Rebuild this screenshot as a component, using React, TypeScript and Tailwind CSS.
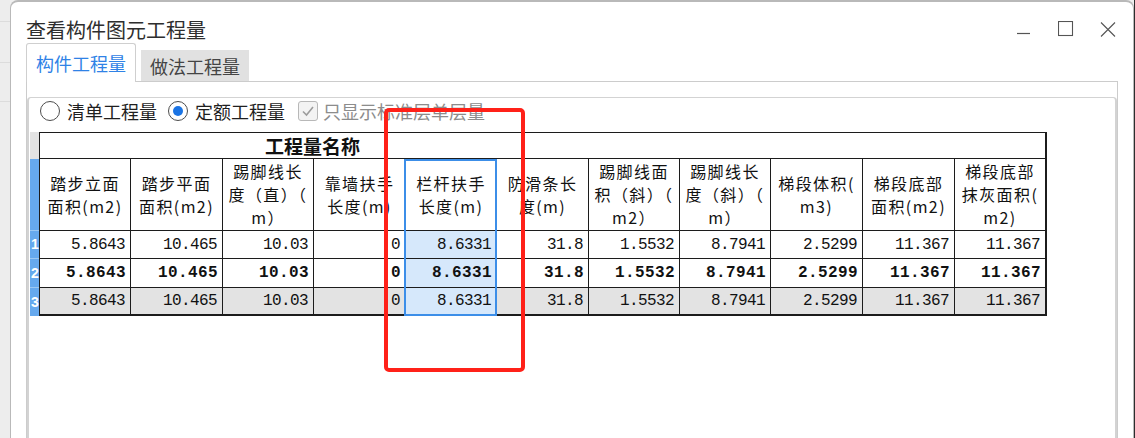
import React from "react";

type Col = { h: string[]; v: string; sel?: boolean };

const cols: Col[] = [
  { h: ["踏步立面", "面积(m2)"], v: "5.8643" },
  { h: ["踏步平面", "面积(m2)"], v: "10.465" },
  { h: ["踢脚线长", "度（直）（", "m）"], v: "10.03" },
  { h: ["靠墙扶手", "长度(m)"], v: "0" },
  { h: ["栏杆扶手", "长度(m)"], v: "8.6331", sel: true },
  { h: ["防滑条长", "度(m)"], v: "31.8" },
  { h: ["踢脚线面", "积（斜）（", "m2）"], v: "1.5532" },
  { h: ["踢脚线长", "度（斜）（", "m）"], v: "8.7941" },
  { h: ["梯段体积(", "m3)"], v: "2.5299" },
  { h: ["梯段底部", "面积(m2)"], v: "11.367" },
  { h: ["梯段底部", "抹灰面积(", "m2)"], v: "11.367" },
];

function Radio({ checked }: { checked?: boolean }) {
  return (
    <div className="w-[20px] h-[20px] rounded-full border border-[#4d4d4d] bg-white flex items-center justify-center shrink-0">
      {checked && <div className="w-[10px] h-[10px] rounded-full bg-[#1b74e4]" />}
    </div>
  );
}

export default function App() {
  return (
    <div className="relative w-[1135px] h-[438px] overflow-hidden flex bg-[#efefef] font-['Noto_Sans_CJK_SC',sans-serif]">
      {/* background window strip */}
      <div className="w-[10px] h-full bg-[#ededed] flex flex-col">
        <div className="h-[22px] border-b border-[#dcdcdc]" />
        <div className="h-[40px] mt-[40px] border-y border-[#dcdcdc]" />
      </div>

      {/* dialog window */}
      <div className="w-[1124px] h-full flex flex-col bg-white border-t-2 border-x border-[#b9b9b9] rounded-t-[8px]">
        {/* title bar */}
        <div className="h-[41px] flex items-start shrink-0">
          <div className="ml-[15px] mt-[16px] text-[20px] leading-[24px] text-[#2e2e2e]">查看构件图元工程量</div>
          <div className="ml-auto mr-[17px] mt-[19px] flex gap-[26px]">
            <svg width="16" height="16" viewBox="0 0 16 16">
              <line x1="1" y1="12.5" x2="14" y2="12.5" stroke="#555" strokeWidth="1.2" />
            </svg>
            <svg width="16" height="16" viewBox="0 0 16 16">
              <rect x="0.5" y="0.5" width="14" height="14" fill="none" stroke="#555" strokeWidth="1.1" />
            </svg>
            <svg width="16" height="16" viewBox="0 0 16 16">
              <path d="M1 1.5 L15 15.5 M15 1.5 L1 15.5" stroke="#555" strokeWidth="1.1" fill="none" />
            </svg>
          </div>
        </div>

        {/* tabs */}
        <div className="h-[38px] ml-[15px] flex items-end shrink-0">
          <div className="relative z-10 w-[110px] h-[39px] mb-[-1px] bg-white border border-b-0 border-[#cfcfcf] rounded-t-[3px] flex items-center justify-center text-[18px] leading-[20px] text-[#2f82e6] pb-[1px]">
            构件工程量
          </div>
          <div className="w-[108px] h-[31px] ml-[5px] bg-[#e1e1e1] flex items-center justify-center text-[18px] leading-[20px] text-[#444]">
            做法工程量
          </div>
        </div>

        {/* tab panel */}
        <div className="ml-[15px] w-[1092px] flex-1 border-t border-x border-[#cccccc] pt-[15px] flex flex-col">
          <div className="flex-1 border-t border-x-2 border-[#d3d3d3] rounded-t-[4px] flex flex-col">
            {/* options row */}
            <div className="mt-[3px] h-[20px] flex items-center pl-[11px] text-[18px] leading-[20px] text-[#1f1f1f]">
              <Radio />
              <span className="ml-[7px]">清单工程量</span>
              <div className="ml-[11px]">
                <Radio checked />
              </div>
              <span className="ml-[7px]">定额工程量</span>
              <div className="ml-[13px] w-[20px] h-[20px] border border-[#b8b8b8] rounded-[3px] bg-[#f3f3f3] flex items-center justify-center">
                <svg width="14" height="14" viewBox="0 0 14 14">
                  <path d="M2 7.5 L5.5 11 L12 3" stroke="#9c9c9c" strokeWidth="1.6" fill="none" />
                </svg>
              </div>
              <span className="ml-[5px] text-[#8c8c8c]">只显示标准层单层量</span>
            </div>

            {/* table */}
            <div className="relative mt-[11px] ml-[1px] w-fit">
              <div className="grid grid-cols-[9px_92px_92px_91px_92px_91px_92px_91px_91px_92px_92px_92px] grid-rows-[27px_72px_28px_29px_28px]">
                {/* title row */}
                <div className="bg-[#e3e3e3]" />
                <div className="col-span-11 border-t border-l border-b border-r-2 border-[#1c1c1c] flex items-center pl-[225px] text-[19px] leading-[22px] font-bold text-[#111]">
                  工程量名称
                </div>

                {/* header row */}
                <div className="bg-[#66a9ee] border-b border-[#9cc8f3]" />
                {cols.map((c, i) => (
                  <div
                    key={"h" + i}
                    className={
                      "bg-white border-b border-[#1c1c1c] flex flex-col items-center justify-center whitespace-nowrap text-[16px] leading-[23px] tracking-[1.4px] text-[#111] " +
                      (i === 0 ? "border-l " : "") +
                      (i === cols.length - 1 ? "border-r-2" : "border-r")
                    }
                  >
                    {c.h.map((l, j) => (
                      <span key={j}>{l}</span>
                    ))}
                  </div>
                ))}

                {/* data rows */}
                {[0, 1, 2].map((r) => (
                  <React.Fragment key={"r" + r}>
                    <div className={"bg-[#66a9ee] flex items-center pl-[1px] text-[14px] font-bold text-white font-['Liberation_Sans',sans-serif] " + (r < 2 ? "border-b border-[#9cc8f3]" : "")}>
                      {r + 1}
                    </div>
                    {cols.map((c, i) => (
                      <div
                        key={"d" + r + "-" + i}
                        className={
                          "flex items-center justify-end font-['Liberation_Mono',monospace] text-[16px] leading-[18px] text-[#111] border-[#1c1c1c] " +
                          (r === 2 ? "border-b-2 " : "border-b ") +
                          (i === 0 ? "border-l " : "") +
                          (i === cols.length - 1 ? "border-r-2 " : "border-r ") +
                          (c.sel ? "bg-[#d6e8fb] " : r === 2 ? "bg-[#e3e3e3] " : "bg-white ") +
                          (r === 1 ? "font-bold tracking-[0.4px] pr-[4px]" : "tracking-[-0.6px] pr-[5px]")
                        }
                      >
                        {c.v}
                      </div>
                    ))}
                  </React.Fragment>
                ))}
              </div>
              {/* selected column outline */}
              <div className="absolute left-[374px] top-[27px] w-[93px] h-[157px] border-2 border-[#3c8ee8] pointer-events-none" />
            </div>
          </div>
        </div>
      </div>

      <div className="w-[1px] h-full bg-[#2d2d2d]" />

      {/* red annotation box */}
      <div className="absolute left-[384px] top-[108px] w-[141px] h-[264px] border-[4px] border-[#ff2119] rounded-[5px] pointer-events-none" />
    </div>
  );
}
